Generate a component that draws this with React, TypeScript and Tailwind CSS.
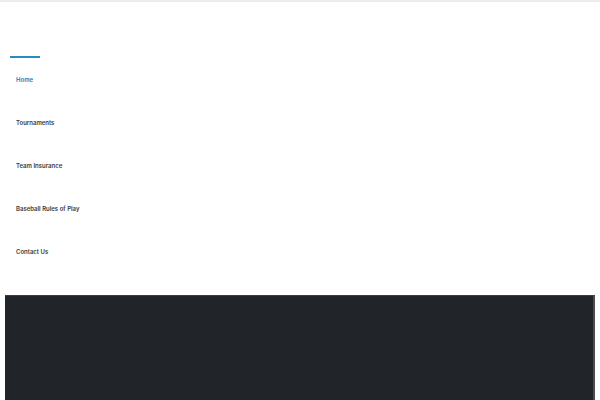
const links = ['Home', 'Tournaments', 'Team Insurance', 'Baseball Rules of Play', 'Contact Us'];

export default function App() {
  return (
    <div className="w-[600px] h-[400px] overflow-hidden bg-white" style={{ fontFamily: 'Inter, "Noto Sans", sans-serif' }}>
      <div className="h-[2px] bg-[#ececec]" />
      <div className="pt-[54px] pl-[10px]">
        <div className="w-[30px] h-[2px] bg-[#2a8bc4]" />
      </div>
      <nav className="flex flex-col pl-4 pt-[17px]">
        {links.map((l, i) => (
          <a
            key={l}
            href="#"
            className={`h-[43px] text-[6px] font-semibold leading-[10px] ${i === 0 ? 'text-[#1a7db8]' : 'text-[#3a3a3a]'}`}
          >
            {l}
          </a>
        ))}
      </nav>
      <div className="mx-[5px] mt-[5px] h-[110px] bg-[#212428] border-t border-[#3a3d40] border-r-2 border-r-[#4a4c4f]" />
    </div>
  );
}
